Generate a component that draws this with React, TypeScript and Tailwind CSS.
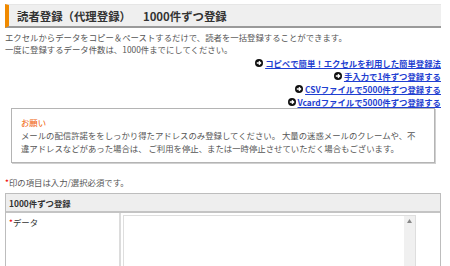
import React from "react";

const Arrow = () => (
  <svg width="8" height="8" viewBox="0 0 8 8" className="mr-[2px] shrink-0">
    <circle cx="4" cy="4" r="4" fill="#111" />
    <path d="M1.8 4 H5.6 M3.9 2.2 L5.7 4 L3.9 5.8" stroke="#fff" strokeWidth="1.3" fill="none" />
  </svg>
);

const links = [
  "コピペで簡単！エクセルを利用した簡単登録法",
  "手入力で1件ずつ登録する",
  "CSVファイルで5000件ずつ登録する",
  "Vcardファイルで5000件ずつ登録する",
];

export default function App() {
  return (
    <div
      className="w-[450px] h-[266px] overflow-hidden bg-white pl-[5px] pr-[9px] pt-[4px] text-[#555] text-[8.4px] leading-[12px]"
      style={{ fontFamily: '"Noto Sans CJK JP", "Noto Sans", sans-serif' }}
    >
      <div className="flex h-[24px] items-center border-l-4 border-l-[#f08a00] border-t border-t-[#e6e6e6] border-b-2 border-b-[#9a9a9a] bg-[#efefef] pl-[8px] text-[11.4px] font-bold text-[#333]">
        <span>読者登録（代理登録）</span>
        <span className="ml-[12px]">1000件ずつ登録</span>
      </div>
      <div className="mt-[3px]">エクセルからデータをコピー＆ペーストするだけで、読者を一括登録することができます。</div>
      <div>一度に登録するデータ件数は、1000件までにしてください。</div>
      <div className="mt-[1px] flex flex-col items-end">
        {links.map((l) => (
          <div key={l} className="flex h-[13px] items-center">
            <Arrow />
            <span className="font-bold text-[#1f3fd1] underline underline-offset-[1px]">{l}</span>
          </div>
        ))}
      </div>
      <div className="mx-[6px] h-[55px] border border-[#b4b4b4] px-[9px] pt-[7px] shadow-[1px_1px_0_#d0d0d0]">
        <div className="text-[#f05a00]">お願い</div>
        <div className="mt-[1px] leading-[13px]">メールの配信許諾ををしっかり得たアドレスのみ登録してください。 大量の迷惑メールのクレームや、不</div>
        <div className="leading-[13px]">違アドレスなどがあった場合は、 ご利用を停止、または一時停止させていただく場合もございます。</div>
      </div>
      <div className="mt-[13px]">
        <span className="text-[#e00]">*</span>印の項目は入力/選択必須です。
      </div>
      <div className="mt-[5px] border border-[#bdbdbd]">
        <div className="flex h-[19px] items-center border-b-2 border-b-[#c4c4c4] bg-[#eeeeee] pl-[3px] text-[8.4px] font-bold text-[#333]">
          1000件ずつ登録
        </div>
        <div className="flex h-[60px]">
          <div className="w-[115px] border-r-2 border-r-[#dcdcdc] pl-[3px] pt-[3px] text-[#333]">
            <span className="text-[#e00]">*</span>データ
          </div>
          <div className="pl-[2px] pt-[2px]">
            <div className="flex h-[60px] w-[293px] border border-[#dedede]">
              <div className="flex-1" />
              <div className="w-[11px] bg-[#f0f0f0] flex justify-center pt-[3px]">
                <svg width="5" height="4" viewBox="0 0 5 4">
                  <path d="M0 4 L2.5 0 L5 4 Z" fill="#888" />
                </svg>
              </div>
            </div>
          </div>
        </div>
      </div>
    </div>
  );
}
